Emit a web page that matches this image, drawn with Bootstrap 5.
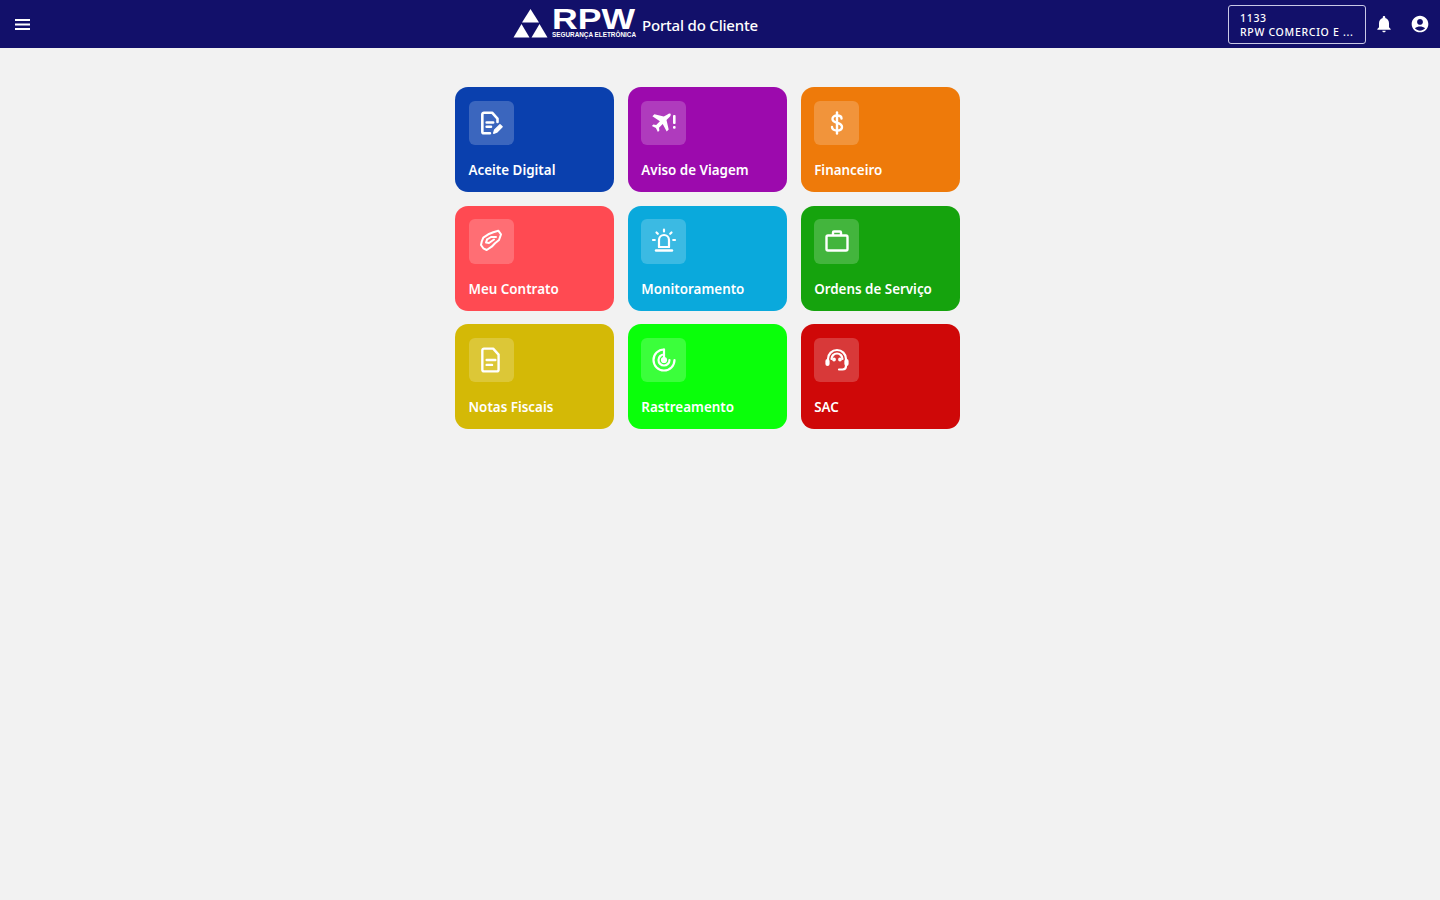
<!DOCTYPE html>
<html lang="pt-BR">

<head>
    <meta charset="UTF-8">
    <meta name="viewport" content="width=device-width, initial-scale=1.0">
    <title>Portal do Cliente</title>
    <link href="https://cdn.jsdelivr.net/npm/bootstrap@5.3.0/dist/css/bootstrap.min.css" rel="stylesheet">
    <style>
        body {
            background-color: #f2f2f2;
            font-family: "Noto Sans", "Open Sans", sans-serif;
        }

        .topo {
            height: 48px;
            background-color: #12106a;
            padding: 0 10px 0 15px;
        }

        .marca {
            margin-left: 483px;
        }

        .marca-logo {
            margin-top: -2px;
            overflow: visible;
        }

        .marca-texto {
            font-family: "Liberation Sans", sans-serif;
            font-weight: 700;
        }

        .titulo-portal {
            font-size: 15px;
            font-weight: 500;
            letter-spacing: -.2px;
            margin-left: 5px;
            margin-top: 3px;
        }

        .caixa-cliente {
            width: 138px;
            height: 39px;
            border: 1px solid #c9c9e6;
            border-radius: 3px;
            padding: 5px 11px;
            font-size: 10.5px;
            font-weight: 500;
            line-height: 14px;
            letter-spacing: .7px;
            white-space: nowrap;
        }

        .grade-atalhos {
            width: 505px;
            margin: 39px 0 0 455px;
            display: grid;
            grid-template-columns: repeat(3, 1fr);
            grid-auto-rows: 105px;
            gap: 13.5px;
        }

        .atalho {
            border-radius: 13px;
            padding: 13.5px;
            color: #fff;
            text-decoration: none;
            font-size: 13.4px;
            font-weight: 600;
        }

        .atalho-icone {
            width: 45px;
            height: 44.5px;
            border-radius: 6px;
            background-color: rgba(255, 255, 255, .2);
        }

        .atalho-nome {
            line-height: 20px;
            margin-top: 15px;
        }
    </style>
</head>

<body>
    <header class="topo d-flex align-items-center text-white">
        <svg width="15" height="11" viewBox="0 0 15 11" fill="#fff">
            <rect width="15" height="2" />
            <rect y="4.500" width="15" height="2" />
            <rect y="9" width="15" height="2" />
        </svg>

        <div class="marca d-flex align-items-center">
            <svg class="marca-logo" width="35" height="29" viewBox="0 0 34 29" fill="#fff">
                <polygon points="17,0 25.500,13.500 8.500,13.500" />
                <polygon points="8,15 16,28.500 0,28.500" />
                <polygon points="26,15 34,28.500 18,28.500" />
            </svg>
            <svg class="ms-1 marca-logo marca-texto" width="85" height="30" viewBox="0 0 85 30" fill="#fff">
                <text x="0" y="21" font-size="29" textLength="83" lengthAdjust="spacingAndGlyphs">RPW</text>
                <text x="0" y="29" font-size="6.400" textLength="84" lengthAdjust="spacingAndGlyphs">SEGURANÇA ELETRÔNICA</text>
            </svg>
            <span class="titulo-portal">Portal do Cliente</span>
        </div>

        <div class="ms-auto d-flex align-items-center">
            <div class="caixa-cliente">
                <div>1133</div>
                <div>RPW COMERCIO E ...</div>
            </div>
            <svg class="ms-2" width="20" height="20" viewBox="0 0 24 24" fill="#fff">
                <path d="M12 22c1.100 0 2-.9 2-2h-4c0 1.100.9 2 2 2zm6-6v-5c0-3.070-1.630-5.640-4.500-6.320V4c0-.83-.67-1.500-1.500-1.500s-1.500.67-1.500 1.500v.68C7.640 5.360 6 7.920 6 11v5l-2 2v1h16v-1l-2-2z" />
            </svg>
            <svg class="ms-3" width="20" height="20" viewBox="0 0 24 24" fill="#fff">
                <path d="M12 2C6.480 2 2 6.480 2 12s4.480 10 10 10 10-4.480 10-10S17.520 2 12 2zm0 4c1.930 0 3.500 1.570 3.500 3.500S13.930 13 12 13s-3.500-1.570-3.500-3.500S10.070 6 12 6zm0 14c-2.030 0-4.430-.82-6.140-2.880C7.550 15.800 9.680 15 12 15s4.450.8 6.140 2.120C16.430 19.180 14.030 20 12 20z" />
            </svg>
        </div>
    </header>

    <main class="grade-atalhos">
        <a href="#" class="atalho d-block" style="background-color: #0a40ae">
            <div class="atalho-icone d-flex align-items-center justify-content-center">
                <svg width="26" height="26" viewBox="0 0 24 24" fill="none" stroke="#fff" stroke-width="2.400" stroke-linejoin="round" stroke-linecap="round">
                    <path d="M11 21.500H5.500a1.500 1.500 0 0 1-1.500-1.500V4a1.500 1.500 0 0 1 1.500-1.500H13l5 5.500v3" />
                    <path d="M8 11.500h6M8 15.500h4" />
                    <path d="M14.500 21.500l.8-3 5-5 2 2-5 5z" fill="#fff" stroke-width="1.200" />
                </svg>
            </div>
            <div class="atalho-nome">Aceite Digital</div>
        </a>
        <a href="#" class="atalho d-block" style="background-color: #9c0aad">
            <div class="atalho-icone d-flex align-items-center justify-content-center">
                <svg width="28" height="24" viewBox="0 0 28 24" fill="#fff">
                    <path d="M17.500 3.500c1-1 2.500-1.200 3-.7s.3 2-.7 3l-3.300 3.300 2.200 9.400-2 2-4-7.500-3.700 3.700.4 2.800-1.500 1.500-2-4-4-2 1.500-1.500 2.800.4 3.700-3.700L2.400 5.200l2-2 9.400 2.200z" />
                    <rect x="23" y="4" width="2.600" height="9" rx="1" />
                    <rect x="23" y="15" width="2.600" height="2.800" rx="1" />
                </svg>
            </div>
            <div class="atalho-nome">Aviso de Viagem</div>
        </a>
        <a href="#" class="atalho d-block" style="background-color: #ee7a0a">
            <div class="atalho-icone d-flex align-items-center justify-content-center">
                <svg width="24" height="24" viewBox="0 0 24 24" fill="none" stroke="#fff" stroke-width="2.400" stroke-linecap="round">
                    <path d="M12 1.500v21" />
                    <path d="M16.500 7.500c0-2-2-3-4.500-3s-4.500 1.300-4.500 3.500c0 5 9.500 2.500 9.500 8 0 2.200-2 3.500-5 3.500s-5-1.300-5-3.500" />
                </svg>
            </div>
            <div class="atalho-nome">Financeiro</div>
        </a>

        <a href="#" class="atalho d-block" style="background-color: #ff4a52">
            <div class="atalho-icone d-flex align-items-center justify-content-center">
                <svg width="26" height="26" viewBox="0 0 26 26" fill="none" stroke="#fff" stroke-width="2" stroke-linejoin="round" stroke-linecap="round">
                    <path d="M3.700 13.700l1.600-4 5-3.400 5-2 5-1.600 2.700 3.600-2 5.700-4 3.300-3.300 3.400-5 3.300-3.400-1.700-2.300-3.300z" />
                    <path d="M9 11.500l4-2.500h5" />
                    <path d="M9 11.500l-1 3 3 .5 5-3.500" />
                </svg>
            </div>
            <div class="atalho-nome">Meu Contrato</div>
        </a>
        <a href="#" class="atalho d-block" style="background-color: #0aa9dc">
            <div class="atalho-icone d-flex align-items-center justify-content-center">
                <svg width="26" height="26" viewBox="0 0 26 26" fill="none" stroke="#fff" stroke-width="2.200" stroke-linecap="round">
                    <path d="M8 19v-7a5 5 0 0 1 10 0v7" />
                    <path d="M5 22.500h16" stroke-width="2.400" />
                    <path d="M8 19h10" />
                    <path d="M13 1.500v2M5.500 4.500l1.300 1.300M20.500 4.500l-1.300 1.300M2 12h1.800M22.200 12H24" />
                </svg>
            </div>
            <div class="atalho-nome">Monitoramento</div>
        </a>
        <a href="#" class="atalho d-block" style="background-color: #15a30d">
            <div class="atalho-icone d-flex align-items-center justify-content-center">
                <svg width="26" height="26" viewBox="0 0 26 26" fill="none" stroke="#fff" stroke-width="2.400" stroke-linejoin="round">
                    <rect x="2.500" y="7.500" width="21" height="15" rx="1.500" />
                    <path d="M9 7.500V4.500a1 1 0 0 1 1-1h6a1 1 0 0 1 1 1v3" />
                </svg>
            </div>
            <div class="atalho-nome">Ordens de Serviço</div>
        </a>

        <a href="#" class="atalho d-block" style="background-color: #d4b906">
            <div class="atalho-icone d-flex align-items-center justify-content-center">
                <svg width="26" height="26" viewBox="0 0 24 24" fill="none" stroke="#fff" stroke-width="2.200" stroke-linejoin="round" stroke-linecap="round">
                    <path d="M5.500 1.500H14l5 5.500v14a1.500 1.500 0 0 1-1.500 1.500h-12a1.500 1.500 0 0 1-1.500-1.500V3a1.500 1.500 0 0 1 1.500-1.500z" />
                    <path d="M8 12h8M8 16.500h5" />
                </svg>
            </div>
            <div class="atalho-nome">Notas Fiscais</div>
        </a>
        <a href="#" class="atalho d-block" style="background-color: #0aff0a">
            <div class="atalho-icone d-flex align-items-center justify-content-center">
                <svg width="26" height="26" viewBox="0 0 26 26" fill="none" stroke="#fff" stroke-width="2.200" stroke-linecap="round">
                    <path d="M13 2.500a10.500 10.500 0 1 0 10.500 10.500" />
                    <path d="M13 7.500a5.500 5.500 0 1 0 5.500 5.500" />
                    <path d="M13 2.500V13" />
                    <circle cx="13" cy="13" r="2" fill="#fff" />
                </svg>
            </div>
            <div class="atalho-nome">Rastreamento</div>
        </a>
        <a href="#" class="atalho d-block" style="background-color: #cf0808">
            <div class="atalho-icone d-flex align-items-center justify-content-center">
                <svg width="26" height="26" viewBox="0 0 26 26" fill="none" stroke="#fff" stroke-width="2.200" stroke-linecap="round" stroke-linejoin="round">
                    <path d="M4 13v-1a9 9 0 0 1 18 0v7c0 2-1.500 3.500-3.500 3.500H15" />
                    <path d="M7.500 12a5.500 5.500 0 0 1 11 0" />
                    <rect x="2.500" y="13" width="2" height="5" rx="1" fill="#fff" />
                    <rect x="21.500" y="13" width="2" height="5" rx="1" fill="#fff" />
                    <circle cx="10" cy="12.500" r=".8" fill="#fff" />
                    <circle cx="16" cy="12.500" r=".8" fill="#fff" />
                </svg>
            </div>
            <div class="atalho-nome">SAC</div>
        </a>
    </main>

    <script src="https://cdn.jsdelivr.net/npm/bootstrap@5.3.0/dist/js/bootstrap.bundle.min.js"></script>
</body>

</html>
